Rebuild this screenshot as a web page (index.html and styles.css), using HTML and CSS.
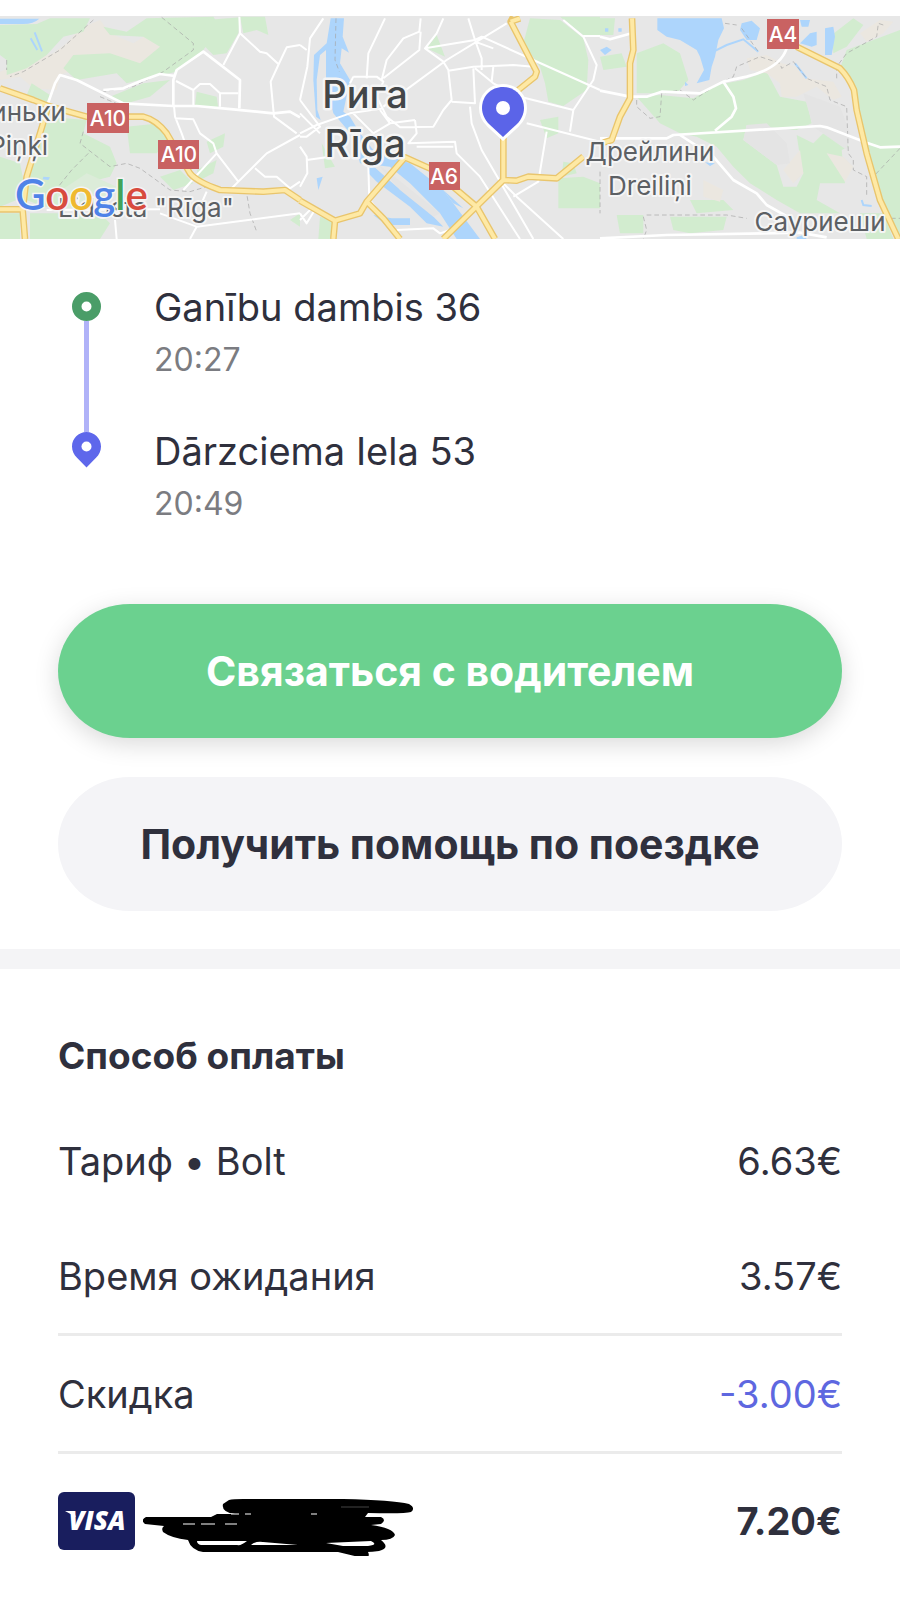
FILE: index.html
```html
<!DOCTYPE html>
<html lang="ru">
<head>
    <meta charset="UTF-8">
    <meta name="viewport" content="width=device-width, initial-scale=1.0">
    <title>Поездка</title>
    <link rel="stylesheet" href="styles.css">
</head>
<body>
    <div class="map">
        <svg class="mapImg" viewBox="0 0 900 223" preserveAspectRatio="xMidYMid slice">
            <svg width="900" height="223" viewBox="0 48 2700 669">
                <!-- west -->
                <g>
                    <path class="sand" d="M0 215L60 190L160 160L200 130L240 85L300 60L330 100L400 130L440 105L490 135L470 170L400 200L330 175L250 200L180 225L170 270L100 265L60 230L0 240Z"/>
                    <path class="wood" d="M0 75L110 72L150 55L270 55L250 95L190 110L140 165L80 205L20 225L20 180L0 165Z"/>
                    <path class="wood" d="M310 80L380 95L440 55L640 50L660 80L610 150L530 215L440 235L380 250L350 220L230 240L190 205L220 165L330 160L420 190L480 140L430 110L330 105Z"/>
                    <path class="wood" d="M720 50L795 50L805 105L770 90L730 100ZM620 60L720 52L715 100L680 160L640 165L605 130Z"/>
                    <path class="wood" d="M330 290L430 250L510 240L450 290L380 310ZM95 250L150 285L140 305L80 285ZM590 275L650 290L655 325L585 315Z"/>
                    <path class="wood" d="M140 350L260 360L250 400L330 440L350 490L330 530L270 545L260 620L130 620L80 600L90 520L110 440ZM380 380L480 370L510 420L470 460L390 460ZM0 470L60 490L70 540L50 600L0 620ZM90 640L300 640L330 670L300 717L90 717ZM480 530L540 510L580 550L520 570ZM620 425L675 400L670 440L630 460ZM590 510L650 480L640 520L600 540ZM0 640L60 640L60 717L0 717ZM870 660L900 640L900 680Z"/>
                    <path class="park" d="M170 580L260 520L350 560L310 620L180 625Z"/>
                    <path class="water" d="M0 56H118Q100 72 70 72H0ZM130 530L150 532L145 540L128 538Z"/>
                    <path class="stream" d="M92 115L112 150M104 97L126 154"/>
                    <path class="border" d="M280 60L180 150L70 215L30 230M485 52L580 130L580 150L490 215L400 260L310 275M300 290L360 315M250 395L240 430L330 500L380 490L420 505L510 570L570 575L620 560L740 580L750 640L770 695M265 460L215 510L175 560M20 180L20 210"/>
                    <path class="street wide" d="M130 350L165 250L180 225L230 240L370 310L520 318L590 318L700 328L820 340L870 335L900 352M520 318L520 240L530 210L610 155L720 240L718 325M430 240L370 265L310 270M430 240L480 222L525 228"/>
                    <path class="street" d="M718 50L720 100L670 195M720 100L780 155L800 160L835 192M900 135L860 142L835 195L812 245L822 350L890 400M528 243L580 270L580 315M580 270L600 252L630 252L660 280L660 320M660 280H715M522 318L525 350L545 400L580 500M525 355L580 358L600 400L640 430L650 460L715 545L690 570M900 405L800 460L700 560M650 460L550 570M765 505L795 530L830 530L870 565L900 545M620 575L600 620M345 660L350 717M140 630L480 628M480 640L590 680L900 640M590 680L570 717"/>
                    <path class="roadEdge" d="M0 265L100 300L145 318L260 350L430 350Q470 360 500 400L570 520Q590 545 660 570L790 575L855 570L900 600M145 318L120 400L80 530L68 630L75 717M0 628H70"/>
                    <path class="road" d="M0 265L100 300L145 318L260 350L430 350Q470 360 500 400L570 520Q590 545 660 570L790 575L855 570L900 600M145 318L120 400L80 530L68 630L75 717M0 628H70"/>
                </g>
                <!-- city -->
                <g transform="translate(900 0)">
                    <path class="wood" d="M690 55L780 60L850 115L865 180L860 270L790 318L745 305L735 250L720 200L670 130ZM780 50H900V105H850ZM410 105L435 170L380 145ZM720 360L775 350L775 400L740 415ZM775 535L850 530L900 550V625H775ZM790 485L820 490L830 520L785 530ZM60 650L100 660L95 717H55ZM65 430L105 500L75 505Z"/>
                    <path class="water" d="M92 55H132L128 110L147 158L125 145L120 190L150 240L130 335L150 350L180 400L220 450L330 490L430 570L540 717H470L420 640L330 550L270 500L180 490L160 410L100 340L78 250L78 150L60 165L50 240L52 330L62 360L48 350L40 240L42 165L80 130Z"/>
                    <path class="water" d="M210 490L290 560L390 640L430 680L380 670L330 620L230 545L205 520ZM275 655H330V675H260L220 645ZM50 535L68 530L55 570ZM430 570L490 625L460 610Z"/>
                    <path class="land" d="M235 495L270 520L420 640L400 650L300 570Z"/>
                    <path class="border" d="M108 55L105 180L118 215"/>
                    <path class="street" d="M70 55L30 115L22 200L0 300M0 135L20 150M0 400L50 375L150 340L250 325M0 300L60 380L20 410L0 410M0 340L60 400M0 440L20 470L22 520L0 560M255 55L205 160L200 235M160 230H230L250 245L230 290L270 370L345 360M160 230L150 250M362 55L358 95L310 115L260 180L245 240M362 95L358 150L250 235M430 55L410 100L375 145L430 185L445 210L455 300L430 330L400 380L300 382L260 350M620 70L440 180L250 320M505 55L525 120L545 175L545 210M375 145L525 120L545 110L700 180L900 270M525 125L580 145M445 212L520 200L640 195L700 200M520 205L525 310L455 305M525 205L580 250L660 290L820 330M580 200L575 245M510 320L515 370L545 450L700 717M610 550L650 590L790 717M640 590L715 545L740 395M680 370L900 425M810 395L820 330L880 240L890 195L850 110L790 60M850 108H900M345 360L350 400L325 430L465 425L470 460L540 530L610 640L660 717M160 340L220 400L270 370L240 330M350 440H460M205 500L208 600M210 600L240 640M290 690L400 685L420 700L450 690M20 480L90 470M50 620L20 670L0 640M0 660L40 620"/>
                    <path class="roadEdge" d="M0 602L105 662L180 640L200 605L315 472L400 510L530 620M640 50L632 65L710 215L705 230L655 270M610 390V540L430 717M610 540L650 542L685 530L770 535L850 470M530 620L585 717M200 605L250 655L300 717M105 662L100 717M632 65L660 55"/>
                    <path class="road" d="M0 602L105 662L180 640L200 605L315 472L400 510L530 620M632 65L710 215L705 230L655 270M610 390V540L430 717M610 540L650 542L685 530L770 535L850 470M530 620L585 717M200 605L250 655L300 717M105 662L100 717M632 65L660 55"/>
                </g>
                <!-- east -->
                <g transform="translate(1800 0)">
                    <path class="wood" d="M0 55H45L40 105H0ZM110 160L190 130L240 160L265 240L230 280H110ZM0 170L65 160L80 200L10 210ZM110 290L180 285L280 295L350 255L430 240L500 215L540 290L620 305L635 370L590 390L440 375L430 420L530 495L550 560L590 560L610 520L600 470L590 405L640 430L670 400L720 380L745 440L725 450L735 550L660 550L650 600L720 640H600L530 600L450 550L400 500L350 440L290 410L240 400L180 370ZM740 150L900 90V717L840 610L790 430L750 250L720 205ZM695 105L760 55L790 75L740 140L700 160ZM50 645H130V700L60 700ZM210 650H380L370 690L270 700L220 690ZM330 570L370 570L350 590ZM780 640H850L880 717H800ZM270 600L370 600L400 630L290 640Z"/>
                    <path class="sand" d="M440 175L500 165L545 190L590 200L610 235L700 245L725 290L700 300L650 260L590 290L545 290L540 250L500 220L450 210ZM780 100L840 60L880 65L850 100L800 125ZM680 460L730 470L760 500L735 545ZM550 510L600 450L610 520L580 550ZM310 540L370 570L360 605L310 590Z"/>
                    <path class="land" d="M440 375L500 370L560 430L570 490L530 495L470 450L430 420ZM610 280L720 320L750 400L740 450L640 380Z"/>
                    <path class="water" d="M172 55H365L372 85L355 120L345 170L335 200L328 240L290 250L312 210L300 170L290 150L240 120L200 110L172 90ZM425 70L455 62L480 85L470 120L440 120L420 90ZM675 85L700 80L705 110L695 165L675 165ZM600 60H630L625 80H605ZM630 100L650 95V135L635 140L600 130ZM0 150L20 140L35 150L15 165ZM15 85H25V95H15ZM55 85H65V95H55ZM255 245L265 255L255 258ZM315 487L345 490L330 498ZM590 712L610 705L620 717H590Z"/>
                    <path class="stream" d="M330 160L380 135L430 118L475 155M585 190L620 235M785 600L790 615L815 618"/>
                    <path class="border" d="M375 70L410 75M425 85L475 155M110 300V320L150 355L180 350L185 280L240 270L280 300L350 255L400 230L410 200L480 170L540 190L545 205L580 185L620 235L680 260L690 300L740 320L745 460L760 480V510L800 530L800 590M710 235V200L740 160L830 110L835 70L850 75M900 445L820 530M0 515V640M130 650L140 690L130 717M140 645H380L440 655M850 655H900"/>
                    <path class="street wide" d="M0 272L90 290L140 290L185 275L300 280L370 245L440 230Q540 205 560 145M370 245L400 290L408 325L395 350L345 392M0 415L200 415L220 405L660 378L680 382L800 428L840 442L900 440M240 405L340 470L400 540L470 580L500 615L580 660M0 110L30 118L95 100M0 715L200 705L600 698L680 712"/>
                    <path class="roadEdge" d="M96 55L100 150L90 190V295L60 350L35 420L10 428M590 140L720 205Q745 230 762 270L770 330L800 460L840 600L895 717"/>
                    <path class="road" d="M96 55L100 150L90 190V295L60 350L35 420L10 428M590 140L720 205Q745 230 762 270L770 330L800 460L840 600L895 717"/>
                </g>
            </svg>

            <g class="shields">
                <rect x="87" y="87" width="42" height="30"/>
                <rect x="158" y="124" width="41" height="29"/>
                <rect x="429" y="146" width="31" height="28"/>
                <rect x="767" y="3" width="32" height="30"/>
                <text x="108" y="110">A10</text>
                <text x="179" y="146">A10</text>
                <text x="444" y="168">A6</text>
                <text x="783" y="26">A4</text>
            </g>

            <g class="places">
                <text x="66" y="105" text-anchor="end">Пиньки</text>
                <text x="48" y="139" text-anchor="end">Piņķi</text>
                <text x="58" y="201">Lidosta "Rīga"</text>
                <text x="650" y="145" text-anchor="middle">Дрейлини</text>
                <text x="650" y="179" text-anchor="middle">Dreiliņi</text>
                <text x="820" y="215" text-anchor="middle">Сауриеши</text>
            </g>
            <g class="city">
                <text x="365" y="92">Рига</text>
                <text x="365" y="141">Rīga</text>
            </g>

            <path class="pin" d="M503 71c-12 0-21 9-21 21 0 6 3 12 7 16l14 13 14-13c4-4 7-10 7-16 0-12-9-21-21-21z"/>
            <circle cx="503" cy="92" r="7" fill="#fff"/>

            <text class="google" x="15" y="194"><tspan fill="#4f83e8">G</tspan><tspan fill="#d84b3e">o</tspan><tspan fill="#efb92f">o</tspan><tspan fill="#4f83e8">g</tspan><tspan fill="#43a35a">l</tspan><tspan fill="#d84b3e">e</tspan></text>
        </svg>
    </div>

    <div class="route">
        <div class="track">
            <svg width="29" height="29" viewBox="0 0 29 29">
                <circle cx="14.5" cy="14.5" r="9.75" fill="none" stroke="#4a9d68" stroke-width="9.5"/>
            </svg>
            <span class="trackLine"></span>
            <svg width="29" height="36" viewBox="0 0 29 36">
                <path fill="#5e67eb" d="M14.500 0C6.500 0 0 6.500 0 14.500c0 4.500 2 8.500 5 11.200L14.500 35.500 24 25.700c3-2.700 5-6.700 5-11.200C29 6.500 22.500 0 14.500 0z"/>
                <circle cx="14.500" cy="14.500" r="5" fill="#fff"/>
            </svg>
        </div>
        <ul class="stops">
            <li>
                <p class="place">Ganību dambis 36</p>
                <p class="time">20:27</p>
            </li>
            <li>
                <p class="place">Dārzciema Iela 53</p>
                <p class="time">20:49</p>
            </li>
        </ul>
    </div>

    <div class="actions">
        <button type="button" class="btn btnGreen">Связаться с водителем</button>
        <button type="button" class="btn">Получить помощь по поездке</button>
    </div>

    <div class="payment">
        <h2>Способ оплаты</h2>
        <table class="bill">
            <tr>
                <th scope="row">Тариф • Bolt</th>
                <td>6.63€</td>
            </tr>
            <tr class="lined">
                <th scope="row">Время ожидания</th>
                <td>3.57€</td>
            </tr>
            <tr class="lined">
                <th scope="row">Скидка</th>
                <td class="discount">-3.00€</td>
            </tr>
            <tr class="total">
                <th scope="row">
                    <div class="card">
                        <svg width="77" height="58" viewBox="0 0 77 58">
                            <rect width="77" height="58" rx="6" fill="#191e5e"/>
                            <text class="visa" x="39" y="38">VISA</text>
                            <path d="M7 19h8l3 6z" fill="#fff"/>
                        </svg>
                        <svg width="272" height="70" viewBox="0 -4 272 70">
                            <path d="M86 10Q90 9 100 9H200Q250 10 266 14Q273 18 268 22Q262 24 225 23L222 27H238Q244 30 238 34L228 35Q250 38 252 45Q250 50 238 50Q248 58 236 61Q222 63 215 61L225 62Q228 68 220 68L195 62H60Q48 60 45 50Q28 48 20 42Q18 38 21 36L2 34Q-3 30 3 27L68 27L74 24H92Q78 22 80 14Z"/>
                            <path d="M54 51H104Q98 56 94 55L58 55Q54 54 54 51ZM108 55Q112 51 120 52L155 55ZM183 53L228 51Q236 55 225 56L200 56Z" fill="#fff"/>
                            <path d="M88 24h8M102 24h6M168 24h6M40 34h12M58 34h14M82 34h12" stroke="#fff" stroke-width="1"/>
                            <path d="M198 17h28" stroke="#444" stroke-width="1"/>
                        </svg>
                    </div>
                </th>
                <td>7.20€</td>
            </tr>
        </table>
    </div>
</body>
</html>
```
FILE: styles.css
```css
*{
    margin: 0;
    padding: 0;
    box-sizing: border-box;
}
body{
    padding-top: 16px;
    background-color: #fff;
    color: #2f303d;
    font-family: Inter, "Noto Sans", sans-serif;
    font-size: 38px;
}
ul{
    list-style: none;
}
svg{
    display: block;
}

/* map */
.map{
    background-color: #e7e7e7;
}
.mapImg{
    width: 100%;
    height: 223px;
}
.wood{
    fill: #d2eccf;
}
.park{
    fill: #dcecd9;
}
.sand{
    fill: #ebe7e0;
}
.land{
    fill: #e4e4e4;
}
.water{
    fill: #add5fc;
}
.stream{
    fill: none;
    stroke: #add5fc;
    stroke-width: 6;
}
.border{
    fill: none;
    stroke: #a5a5a5;
    stroke-width: 2;
    stroke-dasharray: 14 9;
}
.street{
    fill: none;
    stroke: #fff;
    stroke-width: 6;
    stroke-linejoin: round;
}
.wide{
    stroke-width: 8;
}
.roadEdge{
    fill: none;
    stroke: #e9c56c;
    stroke-width: 20;
    stroke-linejoin: round;
}
.road{
    fill: none;
    stroke: #fee9a5;
    stroke-width: 12;
    stroke-linejoin: round;
}
.shields rect{
    fill: #c96262;
}
.shields text{
    fill: #fff;
    font-size: 21px;
    font-weight: 500;
    text-anchor: middle;
}
.places{
    fill: #5c6064;
    font-size: 26px;
    stroke: #f5f5f5;
    stroke-width: 4px;
    stroke-linejoin: round;
    paint-order: stroke;
}
.city{
    fill: #434648;
    font-size: 38px;
    font-weight: 500;
    text-anchor: middle;
    stroke: #f5f5f5;
    stroke-width: 5px;
    stroke-linejoin: round;
    paint-order: stroke;
}
.pin{
    fill: #5b64e8;
    stroke: #fff;
    stroke-width: 6px;
    paint-order: stroke;
}
.google{
    font-family: Lato, sans-serif;
    font-size: 42px;
    font-weight: 600;
    stroke: #f5f5f5;
    stroke-width: 3px;
    paint-order: stroke;
}

/* route */
.route{
    display: flex;
    gap: 53px;
    padding: 40px 58px 0 72px;
}
.track{
    display: flex;
    flex-direction: column;
    align-items: center;
    padding: 13px 0 61px;
}
.trackLine{
    flex: 1;
    width: 5px;
    background-color: #b0b2f8;
}
.stops li + li{
    margin-top: 38px;
}
.place{
    line-height: 56px;
}
.time{
    color: #7b7c81;
    font-size: 32px;
    line-height: 50px;
}

/* buttons */
.actions{
    display: flex;
    flex-direction: column;
    gap: 39px;
    padding: 75px 58px 38px;
    border-bottom: 20px solid #f4f4f6;
}
.btn{
    height: 134px;
    border: none;
    border-radius: 72px / 67px;
    background-color: #f4f4f7;
    color: #2f303d;
    font-family: inherit;
    font-size: 41px;
    font-weight: 700;
    cursor: pointer;
}
.btnGreen{
    background-color: #6bd18f;
    color: #fff;
    box-shadow: 0 6px 24px rgba(0, 0, 0, 0.15);
}

/* payment */
.payment{
    padding: 59px 58px 0;
}
.payment h2{
    margin-bottom: 19px;
    font-size: 37px;
    line-height: 56px;
}
.bill{
    width: 100%;
    border-spacing: 0;
}
.bill th,
.bill td{
    height: 115px;
    font-weight: 400;
    text-align: left;
}
.bill td{
    text-align: right;
}
.bill .lined th,
.bill .lined td{
    height: 118px;
    border-bottom: 3px solid #ebebeb;
}
.bill .discount{
    color: #5e67e0;
}
.bill .total th,
.bill .total td{
    height: 134px;
}
.bill .total td{
    font-weight: 700;
}
.card{
    display: flex;
    align-items: center;
    gap: 8px;
}
.visa{
    fill: #fff;
    font-family: "Open Sans", sans-serif;
    font-size: 26px;
    font-style: italic;
    font-weight: 800;
    text-anchor: middle;
}
```
